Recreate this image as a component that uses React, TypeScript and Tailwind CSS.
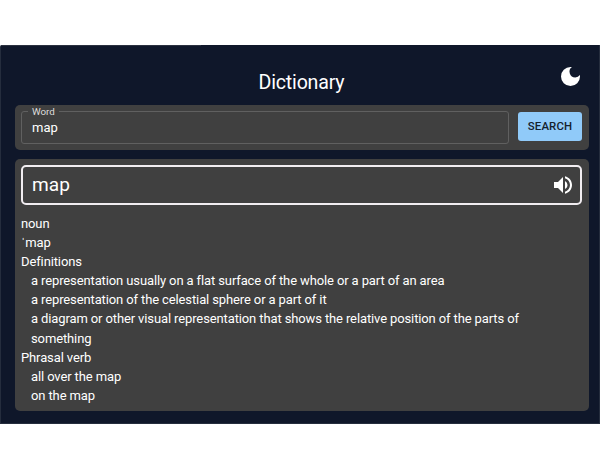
import React from "react";
import { MdVolumeUp } from "react-icons/md";

const definitions: string[] = [
  "a representation usually on a flat surface of the whole or a part of an area",
  "a representation of the celestial sphere or a part of it",
  "a diagram or other visual representation that shows the relative position of the parts of something",
];

const phrases: string[] = ["all over the map", "on the map"];

function Header() {
  return (
    <header className="grid h-[60px] grid-cols-[1fr_auto_1fr] items-start">
      <h1 className="col-start-2 -ml-px pt-[24px] text-[19.6px] leading-[28px] tracking-[-0.2px]">Dictionary</h1>
      <button aria-label="Toggle theme" className="mt-[22px] mr-[9px] justify-self-end">
        <svg width="19" height="19" viewBox="0 0 18 18" fill="#fff">
          <path d="M9 0a9 9 0 1 0 9 9c0-.46-.04-.92-.1-1.36A5.39 5.39 0 0 1 13.5 9.9 5.4 5.4 0 0 1 10.36.1C9.92.04 9.46 0 9 0z" />
        </svg>
      </button>
    </header>
  );
}

function SearchForm() {
  return (
    <section className="flex h-[45px] rounded-[5px] bg-[#404040] pt-[2px] pr-[7px] pl-[6px]">
      <fieldset className="h-[37px] w-[488px] rounded-[3px] border border-[#606060] pl-[6px]">
        <legend className="h-[9px] px-[4px] text-[9.8px] leading-[9px] tracking-[-0.05px] text-[#dedede]">Word</legend>
        <div className="pt-[3px] pl-[4px] text-[13px] leading-[18px]">map</div>
      </fieldset>
      <button className="mt-[5px] ml-[9px] h-[29px] w-[64px] rounded-[3px] bg-[#90caf9] text-[11.4px] font-medium tracking-[0.15px] text-[#15212d]">
        SEARCH
      </button>
    </section>
  );
}

function Result() {
  return (
    <section className="mt-[9px] h-[252px] rounded-[5px] bg-[#404040] pt-[6px] pr-[7px] pl-[6px]">
      <div className="flex h-[40px] items-center justify-between rounded-[5px] border-2 border-[#f1edf1] pr-[5px] pl-[9px]">
        <span className="text-[19.1px] leading-[28px]">map</span>
        <MdVolumeUp size={24} />
      </div>
      <div className="mt-[9px] text-[13px] leading-[19.1px] tracking-[-0.12px]">
        <p>noun</p>
        <p>ˈmap</p>
        <p>Definitions</p>
        <ul className="pr-[40px] pl-[10px]">
          {definitions.map((d) => (
            <li key={d}>{d}</li>
          ))}
        </ul>
        <p>Phrasal verb</p>
        <ul className="pl-[10px]">
          {phrases.map((p) => (
            <li key={p}>{p}</li>
          ))}
        </ul>
      </div>
    </section>
  );
}

export default function App() {
  return (
    <div className="h-[470px] w-[600px] bg-white pt-[45px] font-[Roboto,sans-serif] text-white">
      <main className="h-[379px] rounded-tl-[2px] border-r border-b border-l border-[#252d3d] bg-[#0f172a] pr-[10px] pl-[14px]">
        <div className="-ml-[14px] -mb-px h-px w-[200px] bg-[#2b3140]" />
        <Header />
        <SearchForm />
        <Result />
      </main>
    </div>
  );
}
